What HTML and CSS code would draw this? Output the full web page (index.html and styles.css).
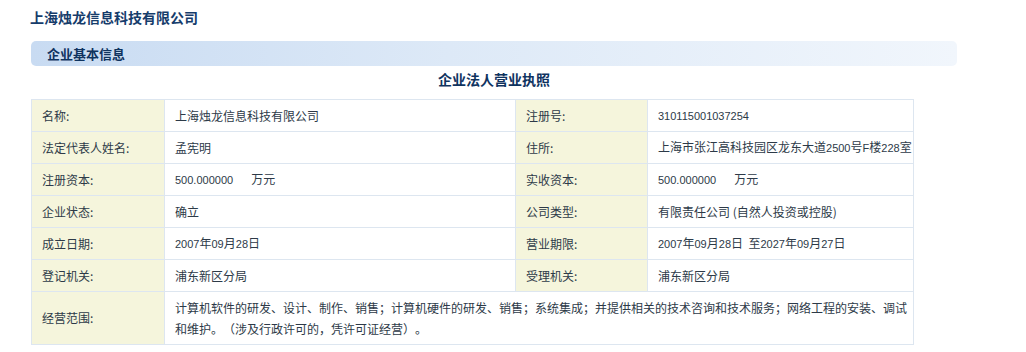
FILE: index.html
```html
<!DOCTYPE html>
<html lang="zh-CN">
<head>
<meta charset="utf-8">
<title>上海烛龙信息科技有限公司</title>
<link rel="stylesheet" href="styles.css">
</head>
<body>
<div class="page">
  <h1 class="company">上海烛龙信息科技有限公司</h1>
  <div class="section-bar">企业基本信息</div>
  <h2 class="license-title">企业法人营业执照</h2>
  <table class="info">
    <colgroup>
      <col class="c-label1">
      <col class="c-value1">
      <col class="c-label2">
      <col class="c-value2">
    </colgroup>
    <tr>
      <td class="label">名称:</td>
      <td>上海烛龙信息科技有限公司</td>
      <td class="label">注册号:</td>
      <td><span class="num">310115001037254</span></td>
    </tr>
    <tr>
      <td class="label">法定代表人姓名:</td>
      <td>孟宪明</td>
      <td class="label">住所:</td>
      <td>上海市张江高科技园区龙东大道<span class="num">2500</span>号<span class="num">F</span>楼<span class="num">228</span>室</td>
    </tr>
    <tr>
      <td class="label">注册资本:</td>
      <td><span class="num">500.000000</span><span class="gap"></span>万元</td>
      <td class="label">实收资本:</td>
      <td><span class="num">500.000000</span><span class="gap"></span>万元</td>
    </tr>
    <tr>
      <td class="label">企业状态:</td>
      <td>确立</td>
      <td class="label">公司类型:</td>
      <td>有限责任公司 (自然人投资或控股)</td>
    </tr>
    <tr>
      <td class="label">成立日期:</td>
      <td><span class="num">2007</span>年<span class="num">09</span>月<span class="num">28</span>日</td>
      <td class="label">营业期限:</td>
      <td><span class="num">2007</span>年<span class="num">09</span>月<span class="num">28</span>日&nbsp; 至<span class="num">2027</span>年<span class="num">09</span>月<span class="num">27</span>日</td>
    </tr>
    <tr>
      <td class="label">登记机关:</td>
      <td>浦东新区分局</td>
      <td class="label">受理机关:</td>
      <td>浦东新区分局</td>
    </tr>
    <tr class="tall">
      <td class="label">经营范围:</td>
      <td colspan="3" class="scope">计算机软件的研发、设计、制作、销售；计算机硬件的研发、销售；系统集成；并提供相关的技术咨询和技术服务；网络工程的安装、调试和维护。（涉及行政许可的，凭许可证经营）。</td>
    </tr>
  </table>
</div>
</body>
</html>
```

FILE: styles.css
```css
html, body {
  margin: 0;
  padding: 0;
  background: #ffffff;
}

.page {
  padding: 7px 0 0 31px;
  font-family: "Noto Sans CJK SC", "Liberation Sans", sans-serif;
  font-size: 12px;
  color: #2d3a48;
  text-spacing-trim: space-all;
}

.company {
  margin: 0 0 0 -1px;
  font-size: 14px;
  line-height: 20px;
  font-weight: bold;
  color: #163c6b;
}

.section-bar {
  margin-top: 14px;
  width: 926px;
  height: 25px;
  line-height: 25px;
  box-sizing: border-box;
  padding-left: 16px;
  border-radius: 5px;
  background: linear-gradient(to right, #c8dbf2 0%, #dde9f7 45%, #f1f6fc 100%);
  font-size: 13px;
  font-weight: bold;
  color: #0f335f;
}

.license-title {
  margin: 3px 0 0 0;
  width: 926px;
  text-align: center;
  font-size: 14px;
  line-height: 20px;
  font-weight: bold;
  color: #0f335f;
}

.info {
  margin-top: 10px;
  border-collapse: collapse;
  table-layout: fixed;
  width: 882px;
  border: 1px solid #dde6f0;
}

.c-label1 { width: 133px; }
.c-value1 { width: 351px; }
.c-label2 { width: 132px; }
.c-value2 { width: 266px; }

.info td {
  height: 31px;
  padding: 0 2px 0 10px;
  border: 1px solid #dde6f0;
  vertical-align: middle;
  line-height: 20px;
  white-space: nowrap;
  overflow: hidden;
}

.info td.label {
  background: #f5f5dc;
}

.info td.scope {
  white-space: normal;
  line-height: 21px;
}

.info tr.tall td {
  height: 52px;
}

.num {
  font-family: "Liberation Sans", "Noto Sans CJK SC", sans-serif;
  font-size: 11px;
}

.gap {
  display: inline-block;
  width: 18px;
}
```
